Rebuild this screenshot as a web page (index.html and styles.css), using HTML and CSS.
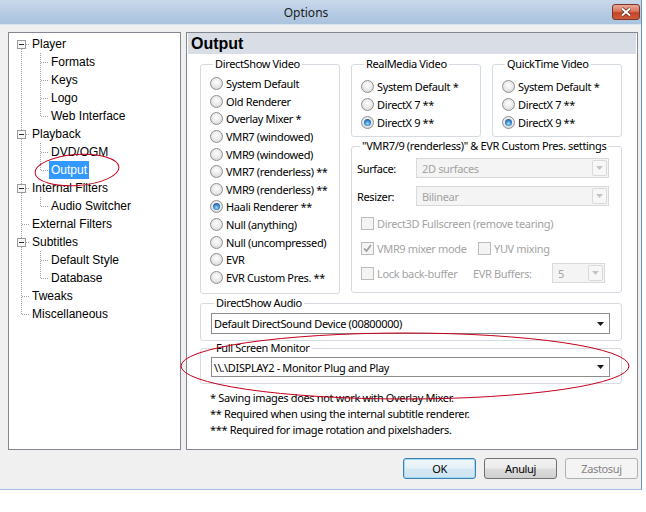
FILE: index.html
```html
<!DOCTYPE html>
<html>
<head>
<meta charset="utf-8">
<title>Options</title>
<link rel="stylesheet" href="styles.css">
</head>
<body>
<div class="window">
  <div class="titlebar">
    <div class="title">Options</div>
    <div class="close">
      <svg width="14" height="10" viewBox="0 0 14 10"><path d="M3 1.5L11 8.5M11 1.5L3 8.5" class="xs"/><path d="M3 1.5L11 8.5M11 1.5L3 8.5" class="xw"/></svg>
    </div>
  </div>
  <div class="client">
    <div class="main">
      <div class="tree">
        <div class="node"><svg class="gut" width="21" height="18"><path class="dl" d="M12.5 10V18M17 9.5H21"/><rect class="box" x="8.5" y="5.5" width="8" height="8"/><path class="minus" d="M10 9.5H15"/></svg><span class="lbl">Player</span></div>
        <div class="node"><svg class="gut" width="40" height="18"><path class="dl" d="M12.5 0V18M31.5 0V18M32 9.5H40"/></svg><span class="lbl">Formats</span></div>
        <div class="node"><svg class="gut" width="40" height="18"><path class="dl" d="M12.5 0V18M31.5 0V18M32 9.5H40"/></svg><span class="lbl">Keys</span></div>
        <div class="node"><svg class="gut" width="40" height="18"><path class="dl" d="M12.5 0V18M31.5 0V18M32 9.5H40"/></svg><span class="lbl">Logo</span></div>
        <div class="node"><svg class="gut" width="40" height="18"><path class="dl" d="M12.5 0V18M31.5 0V10M32 9.5H40"/></svg><span class="lbl">Web Interface</span></div>
        <div class="node"><svg class="gut" width="21" height="18"><path class="dl" d="M12.5 0V18M17 9.5H21"/><rect class="box" x="8.5" y="5.5" width="8" height="8"/><path class="minus" d="M10 9.5H15"/></svg><span class="lbl">Playback</span></div>
        <div class="node"><svg class="gut" width="40" height="18"><path class="dl" d="M12.5 0V18M31.5 0V18M32 9.5H40"/></svg><span class="lbl">DVD/OGM</span></div>
        <div class="node"><svg class="gut" width="40" height="18"><path class="dl" d="M12.5 0V18M31.5 0V10M32 9.5H40"/></svg><span class="lbl sel">Output</span></div>
        <div class="node"><svg class="gut" width="21" height="18"><path class="dl" d="M12.5 0V18M17 9.5H21"/><rect class="box" x="8.5" y="5.5" width="8" height="8"/><path class="minus" d="M10 9.5H15"/></svg><span class="lbl">Internal Filters</span></div>
        <div class="node"><svg class="gut" width="40" height="18"><path class="dl" d="M12.5 0V18M31.5 0V10M32 9.5H40"/></svg><span class="lbl">Audio Switcher</span></div>
        <div class="node"><svg class="gut" width="21" height="18"><path class="dl" d="M12.5 0V18M13 9.5H21"/></svg><span class="lbl">External Filters</span></div>
        <div class="node"><svg class="gut" width="21" height="18"><path class="dl" d="M12.5 0V18M17 9.5H21"/><rect class="box" x="8.5" y="5.5" width="8" height="8"/><path class="minus" d="M10 9.5H15"/></svg><span class="lbl">Subtitles</span></div>
        <div class="node"><svg class="gut" width="40" height="18"><path class="dl" d="M12.5 0V18M31.5 0V18M32 9.5H40"/></svg><span class="lbl">Default Style</span></div>
        <div class="node"><svg class="gut" width="40" height="18"><path class="dl" d="M12.5 0V18M31.5 0V10M32 9.5H40"/></svg><span class="lbl">Database</span></div>
        <div class="node"><svg class="gut" width="21" height="18"><path class="dl" d="M12.5 0V18M13 9.5H21"/></svg><span class="lbl">Tweaks</span></div>
        <div class="node"><svg class="gut" width="21" height="18"><path class="dl" d="M12.5 0V10M13 9.5H21"/></svg><span class="lbl">Miscellaneous</span></div>
      </div>
      <div class="panel">
        <div class="header">Output</div>
        <div class="pbody">
          <div class="toprow">
            <fieldset class="grp ds">
              <legend>DirectShow Video</legend>
              <div class="opt"><span class="radio"></span>System Default</div>
              <div class="opt"><span class="radio"></span>Old Renderer</div>
              <div class="opt"><span class="radio"></span>Overlay Mixer *</div>
              <div class="opt"><span class="radio"></span>VMR7 (windowed)</div>
              <div class="opt"><span class="radio"></span>VMR9 (windowed)</div>
              <div class="opt"><span class="radio"></span>VMR7 (renderless) **</div>
              <div class="opt"><span class="radio"></span>VMR9 (renderless) **</div>
              <div class="opt"><span class="radio on"></span>Haali Renderer **</div>
              <div class="opt"><span class="radio"></span>Null (anything)</div>
              <div class="opt"><span class="radio"></span>Null (uncompressed)</div>
              <div class="opt"><span class="radio"></span>EVR</div>
              <div class="opt"><span class="radio"></span>EVR Custom Pres. **</div>
            </fieldset>
            <div class="rcol">
              <div class="rmqt">
                <fieldset class="grp small">
                  <legend>RealMedia Video</legend>
                  <div class="opt r"><span class="radio"></span>System Default *</div>
                  <div class="opt r"><span class="radio"></span>DirectX 7 **</div>
                  <div class="opt r"><span class="radio on"></span>DirectX 9 **</div>
                </fieldset>
                <fieldset class="grp small">
                  <legend>QuickTime Video</legend>
                  <div class="opt r"><span class="radio"></span>System Default *</div>
                  <div class="opt r"><span class="radio"></span>DirectX 7 **</div>
                  <div class="opt r"><span class="radio on"></span>DirectX 9 **</div>
                </fieldset>
              </div>
              <fieldset class="grp vmr">
                <legend>"VMR7/9 (renderless)" &amp; EVR Custom Pres. settings</legend>
                <div class="vrow"><span class="vlabel">Surface:</span><div class="dcombo wide"><span>2D surfaces</span><span class="dbtn"><svg width="7" height="4"><path d="M0 0H7L3.5 4Z" fill="#c4c4c4"/></svg></span></div></div>
                <div class="vrow gap8"><span class="vlabel">Resizer:</span><div class="dcombo wide"><span>Bilinear</span><span class="dbtn"><svg width="7" height="4"><path d="M0 0H7L3.5 4Z" fill="#c4c4c4"/></svg></span></div></div>
                <div class="vrow gap7 ind"><span class="chk"></span><span class="dis">Direct3D Fullscreen (remove tearing)</span></div>
                <div class="vrow gap5 ind"><span class="citem"><span class="chk"><svg width="11" height="11" viewBox="0 0 11 11"><path d="M2 5.5L4.5 8L9 2" fill="none" stroke="#9a9a9a" stroke-width="1.6"/></svg></span><span class="dis">VMR9 mixer mode</span></span><span class="chk"></span><span class="dis">YUV mixing</span></div>
                <div class="vrow gap5 ind"><span class="citem2"><span class="chk"></span><span class="dis">Lock back-buffer</span></span><span class="evrl dis">EVR Buffers:</span><div class="dcombo small"><span>5</span><span class="dbtn"><svg width="7" height="4"><path d="M0 0H7L3.5 4Z" fill="#c4c4c4"/></svg></span></div></div>
              </fieldset>
            </div>
          </div>
          <fieldset class="grp audio">
            <legend>DirectShow Audio</legend>
            <div class="combo"><span>Default DirectSound Device (00800000)</span><svg width="7" height="4"><path d="M0 0H7L3.5 4Z" fill="#1a1a1a"/></svg></div>
          </fieldset>
          <fieldset class="grp mon">
            <legend>Full Screen Monitor</legend>
            <div class="combo"><span>\\.\DISPLAY2 - Monitor Plug and Play</span><svg width="7" height="4"><path d="M0 0H7L3.5 4Z" fill="#1a1a1a"/></svg></div>
          </fieldset>
          <div class="notes">
            <div>* Saving images does not work with Overlay Mixer.</div>
            <div>** Required when using the internal subtitle renderer.</div>
            <div>*** Required for image rotation and pixelshaders.</div>
          </div>
        </div>
      </div>
    </div>
    <div class="buttons">
      <div class="btn def">OK</div>
      <div class="btn">Anuluj</div>
      <div class="btn off">Zastosuj</div>
    </div>
  </div>
</div>
<svg class="annot" width="646" height="512" viewBox="0 0 646 512">
  <ellipse cx="77" cy="170" rx="42" ry="15.5" transform="rotate(-4 77 170)"/>
  <ellipse cx="405" cy="366" rx="224" ry="33"/>
</svg>
</body>
</html>
```

FILE: styles.css
```css
* { box-sizing: border-box; }
html, body { margin: 0; padding: 0; }
body {
  background: #ffffff;
  font-family: "Noto Sans", "DejaVu Sans", sans-serif;
  font-size: 11px;
  letter-spacing: -0.35px;
  color: #000;
  width: 646px;
  height: 512px;
  overflow: hidden;
}
.window {
  width: 642px;
  height: 490px;
  background: #f0f0f0;
  border-right: 1px solid #6f93bd;
  border-bottom: 1px solid #a3bedc;
  display: flex;
  flex-direction: column;
}
.titlebar {
  height: 25px;
  flex: none;
  display: flex;
  align-items: center;
  background: linear-gradient(#c9d9ec 0%, #b9cde4 45%, #abc3de 100%);
  border-bottom: 1px solid #d9e4f0;
}
.title {
  flex: 1;
  text-align: center;
  font-size: 12px;
  letter-spacing: 0;
  color: #1b1b1b;
  padding-top: 1px;
}
.close {
  width: 28px;
  height: 16px;
  margin-right: 1px;
  border: 1px solid #7d3326;
  border-radius: 3px;
  background: linear-gradient(#eaa998 0%, #d9765e 45%, #c64428 55%, #cf5a3c 100%);
  display: flex;
  align-items: center;
  justify-content: center;
}
.xs { stroke: #5a1f14; stroke-width: 3.4; fill: none; }
.xw { stroke: #ffffff; stroke-width: 2; fill: none; }

.client {
  flex: 1;
  padding: 7px 3px 0 8px;
  display: flex;
  flex-direction: column;
}
.main {
  display: flex;
  gap: 5px;
  height: 418px;
}
.tree {
  width: 173px;
  flex: none;
  background: #fff;
  border: 1px solid #828790;
  padding-top: 2px;
  font-family: "Liberation Sans", Arial, sans-serif;
  font-size: 12px;
  letter-spacing: 0;
}
.node {
  height: 18px;
  display: flex;
  align-items: center;
}
.gut { flex: none; display: block; }
.dl { stroke: #a0a0a0; stroke-width: 1; stroke-dasharray: 1 1; fill: none; }
.box { fill: #f7f7f7; stroke: #9a9a9a; stroke-width: 1; }
.minus { stroke: #2b2b2b; stroke-width: 1; }
.lbl {
  padding: 0 2px;
  height: 18px;
  line-height: 18px;
  white-space: nowrap;
}
.lbl.sel { background: #3399ff; color: #fff; }

.panel {
  flex: 1;
  background: #fff;
  border: 1px solid #828790;
}
.header {
  height: 21px;
  margin: 0 1px;
  background: #d9dee6;
  font-family: "Liberation Sans", Arial, sans-serif;
  font-weight: bold;
  font-size: 16px;
  letter-spacing: 0;
  line-height: 21px;
  padding-left: 3px;
}
.pbody {
  padding: 3px 15px 0 13px;
}
.toprow {
  display: flex;
  gap: 11px;
  align-items: flex-start;
}
.grp {
  margin: 0;
  min-width: 0;
  border: 1px solid #d5dbe0;
  border-radius: 3px;
  padding: 0 9px;
}
.grp legend {
  margin-left: 3px;
  padding: 0 2px;
  line-height: 14px;
  height: 14px;
  white-space: nowrap;
  color: #000;
}
.ds {
  width: 140px;
  padding-top: 4px;
  padding-bottom: 7px;
}
.opt {
  height: 17.6px;
  display: flex;
  align-items: center;
  gap: 3px;
  white-space: nowrap;
}
.opt.r { height: 18px; }
.radio {
  flex: none;
  width: 13px;
  height: 13px;
  border-radius: 50%;
  border: 1px solid #8e8f8f;
  background: radial-gradient(circle at 50% 40%, #ffffff 0%, #ececec 45%, #cfcfcf 100%);
  display: flex;
  align-items: center;
  justify-content: center;
}
.radio.on::after {
  content: "";
  width: 7px;
  height: 7px;
  border-radius: 50%;
  background: radial-gradient(circle at 50% 65%, #a4dcfb 0%, #3a8bd0 45%, #123f6b 100%);
}
.rcol {
  width: 271px;
  flex: none;
  display: flex;
  flex-direction: column;
}
.rmqt {
  display: flex;
  gap: 11px;
}
.small {
  width: 130px;
  padding-top: 6px;
  padding-bottom: 5px;
}
.vmr {
  margin-top: 2px;
  padding: 5px 12px 9px 5px;
  display: flex;
  flex-direction: column;
}
.vrow {
  height: 20px;
  display: flex;
  align-items: center;
  white-space: nowrap;
}
.gap8 { margin-top: 8px; }
.gap7 { margin-top: 7px; }
.gap5 { margin-top: 5px; }
.ind { padding-left: 4px; }
.vlabel { width: 59px; flex: none; }
.dis { color: #a3a3a3; }
.dcombo {
  height: 20px;
  border: 1px solid #d9d9d9;
  background: #f4f4f4;
  display: flex;
  align-items: center;
  justify-content: space-between;
  padding: 0 1px 0 5px;
  color: #a3a3a3;
}
.dcombo.wide { width: 193px; }
.dcombo.small { width: 53px; }
.dbtn {
  width: 15px;
  height: 16px;
  border: 1px solid #dadada;
  border-radius: 2px;
  background: #f7f7f7;
  display: flex;
  align-items: center;
  justify-content: center;
}
.chk {
  flex: none;
  width: 13px;
  height: 13px;
  border: 1px solid #bcbcbc;
  background: #f4f4f4;
  margin-right: 3px;
  display: flex;
  align-items: center;
  justify-content: center;
}
.citem { width: 117px; display: flex; align-items: center; }
.citem2 { width: 112px; display: flex; align-items: center; }
.evrl { width: 79px; }

.audio {
  margin-top: 2px;
  padding: 3px 11px 6px 10px;
}
.mon {
  padding: 2px 11px 6px 10px;
}
.combo {
  height: 21px;
  border: 1px solid #8c8c8c;
  background: #fff;
  display: flex;
  align-items: center;
  justify-content: space-between;
  padding: 0 5px 0 2px;
}
.mon .combo { height: 20px; }
.notes {
  margin-top: 6px;
  padding-left: 10px;
  line-height: 16px;
}

.buttons {
  display: flex;
  justify-content: flex-end;
  gap: 8px;
  margin-top: 8px;
}
.btn {
  width: 73px;
  height: 21px;
  border: 1px solid #707070;
  border-radius: 3px;
  background: linear-gradient(#f2f2f2 0%, #ebebeb 48%, #dddddd 52%, #cfcfcf 100%);
  display: flex;
  align-items: center;
  justify-content: center;
}
.btn.def {
  border-color: #3c7fb1;
  box-shadow: inset 0 0 0 1px #9fdcf4;
  background: linear-gradient(#f0f8fc 0%, #e5f1f8 48%, #d6e9f4 52%, #cde3f0 100%);
}
.btn.off {
  border-color: #adb2b5;
  background: #f4f4f4;
  color: #838383;
}
.annot {
  position: absolute;
  left: 0;
  top: 0;
  pointer-events: none;
}
.annot ellipse {
  fill: none;
  stroke: #c4001b;
  stroke-width: 1;
}
```
